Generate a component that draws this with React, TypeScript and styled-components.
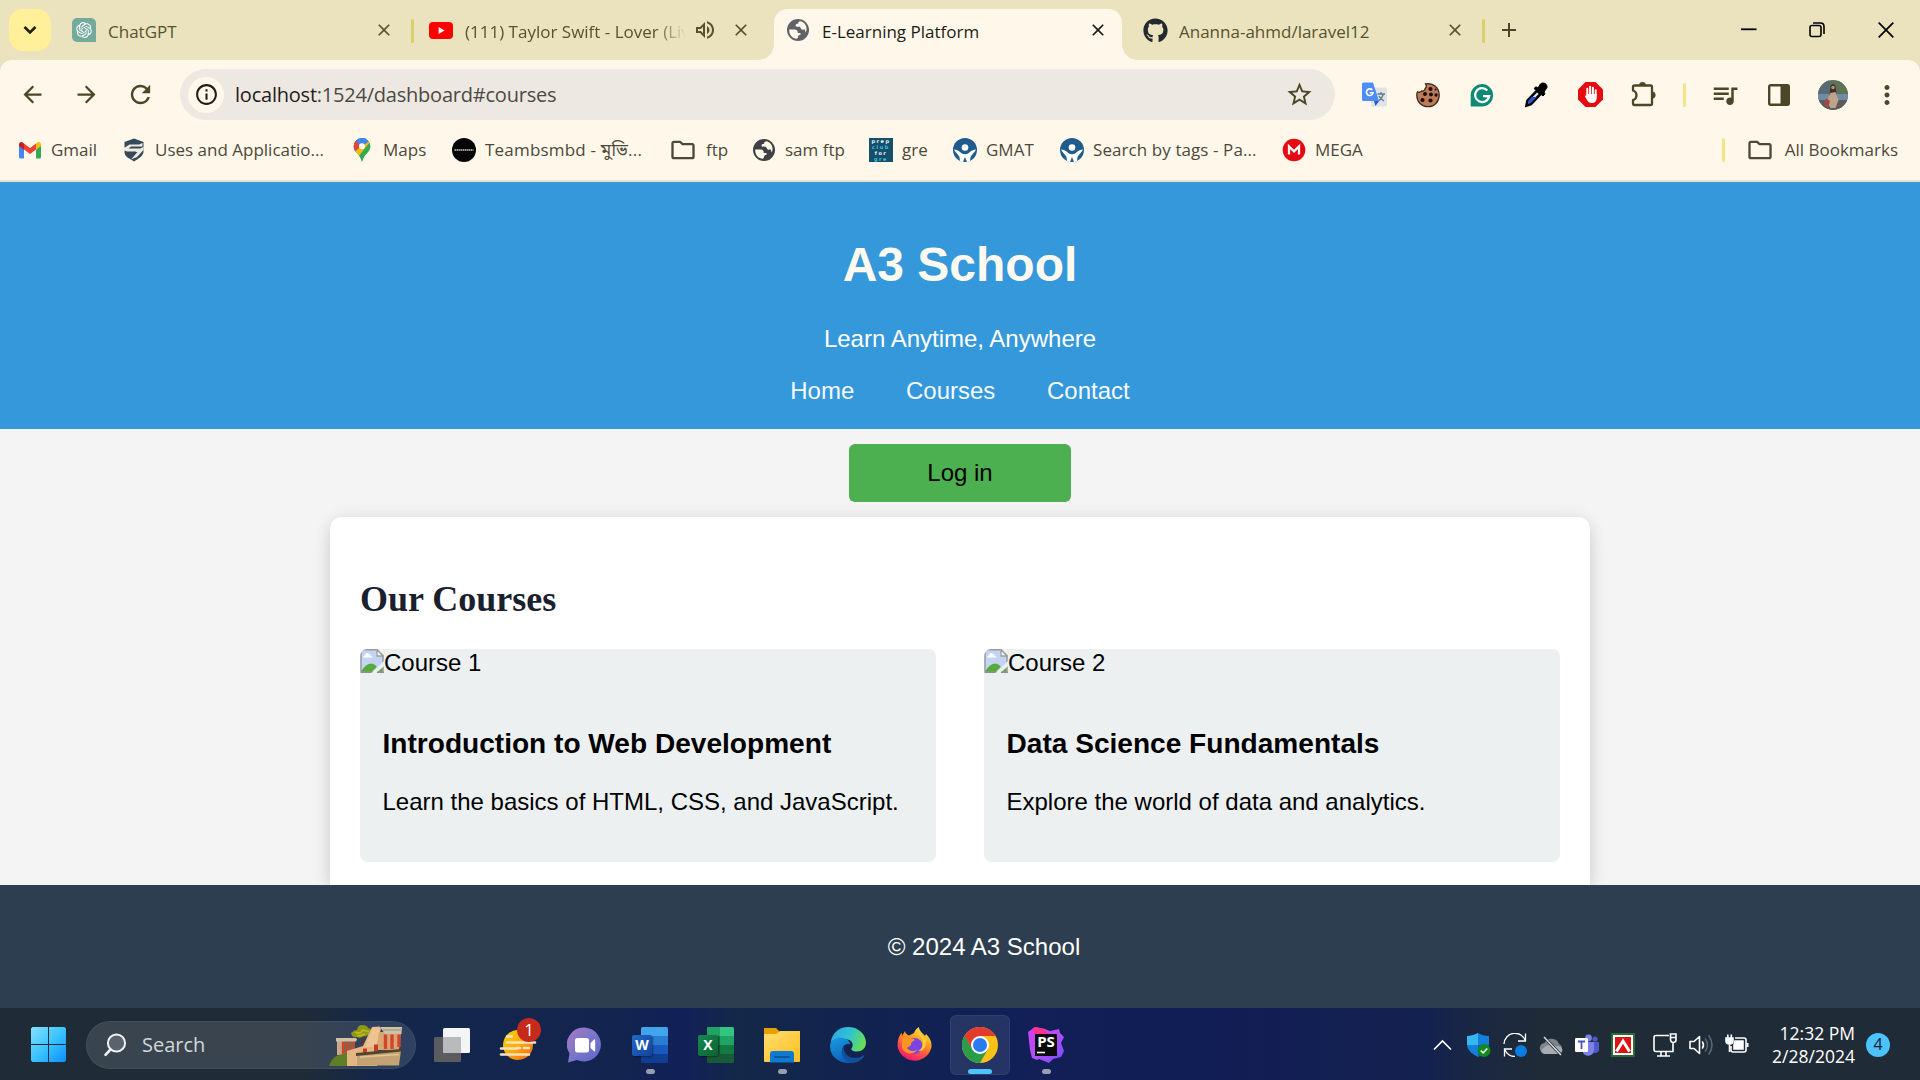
import React from 'react';
import styled, { createGlobalStyle } from 'styled-components';
import {
  MdArrowBack,
  MdArrowForward,
  MdRefresh,
  MdInfoOutline,
  MdStarBorder,
  MdQueueMusic,
  MdOutlineFolder,
  MdMoreVert,
  MdOutlineVolumeUp,
  MdClose,
  MdAdd,
} from 'react-icons/md';
import { FaGithub } from 'react-icons/fa';
import { RiOpenaiFill } from 'react-icons/ri';

const ui = `'Segoe UI', 'Open Sans', 'Noto Sans', 'Noto Sans Bengali', sans-serif`;
const olive = '#4b4628';

const GlobalStyle = createGlobalStyle`
  * { box-sizing: border-box; }
  body { margin: 0; overflow: hidden; background: #f4f4f4; }
  svg { display: block; flex: none; }
`;

const Screen = styled.div`
  width: 1920px;
  height: 1080px;
  overflow: hidden;
  display: flex;
  flex-direction: column;
  font-family: ${ui};
`;

/* ---------- browser chrome ---------- */

const TabStrip = styled.div`
  height: 60px;
  flex: none;
  display: flex;
  background: #ebe3bd;
  padding-left: 9px;
`;

const TabSearch = styled.div`
  width: 42px;
  height: 42px;
  margin: 9px 6px 0 0;
  border-radius: 14px;
  background: #fff099;
  display: flex;
  align-items: center;
  justify-content: center;
`;

const Tab = styled.div<{ $w: number; $active?: boolean; $end?: number }>`
  position: relative;
  width: ${(p) => p.$w}px;
  height: 51px;
  margin-top: 9px;
  padding: 0 ${(p) => 12 + (p.$end ?? 0)}px 9px 15px;
  display: flex;
  align-items: center;
  border-radius: 14px 14px 0 0;
  color: ${(p) => (p.$active ? '#1d1b12' : '#57522f')};
  background: ${(p) => (p.$active ? '#fff8ea' : 'transparent')};
  ${(p) =>
    p.$active &&
    `
    padding-left: 12px;
    &::before, &::after {
      content: '';
      position: absolute;
      bottom: 0;
      width: 15px;
      height: 15px;
    }
    &::before { left: -15px; background: radial-gradient(circle at 0 0, transparent 14.5px, #fff8ea 15px); }
    &::after { right: -15px; background: radial-gradient(circle at 100% 0, transparent 14.5px, #fff8ea 15px); }
  `}
`;

const TabTitle = styled.span<{ $fade?: boolean; $gap?: number }>`
  flex: 1;
  min-width: 0;
  margin-left: ${(p) => p.$gap ?? 12}px;
  overflow: hidden;
  white-space: nowrap;
  font-size: 17px;
  line-height: 24px;
  padding-top: 4px;
  ${(p) => p.$fade && 'mask-image: linear-gradient(90deg, #000 86%, transparent 100%);'}
`;

const TabSound = styled.span`
  margin: 0 14px 0 7px;
`;

const Divider = styled.span<{ $color: string }>`
  width: 3px;
  height: 24px;
  flex: none;
  border-radius: 2px;
  background: ${(p) => p.$color};
`;

const TabDivider = styled(Divider)`
  margin-top: 19px;
`;

const NewTab = styled.span`
  margin: 18px 0 0 12px;
  color: ${olive};
`;

const WindowButtons = styled.div`
  margin-left: auto;
  display: flex;
  align-items: center;
  height: 60px;
`;

const WindowButton = styled.span`
  width: 68.5px;
  display: flex;
  justify-content: center;
`;

const ToolbarBack = styled.div`
  background: #ebe3bd;
  flex: none;
`;

const Toolbar = styled.div`
  height: 69px;
  display: flex;
  align-items: center;
  padding: 0 5px;
  background: #fff8ea;
  border-radius: 12px 12px 0 0;
`;

const ToolButton = styled.span`
  width: 54px;
  flex: none;
  display: flex;
  justify-content: center;
  color: ${olive};
`;

const AddressBar = styled.div`
  width: 1155px;
  height: 51px;
  margin-left: 13px;
  padding: 0 21px 0 8px;
  border-radius: 26px;
  background: #ede8e1;
  display: flex;
  align-items: center;
`;

const SiteInfo = styled.span`
  width: 36px;
  height: 36px;
  border-radius: 50%;
  background: #fff8ea;
  display: flex;
  align-items: center;
  justify-content: center;
  color: #1f1e16;
`;

const Url = styled.span`
  flex: 1;
  margin-left: 11px;
  font-size: 20px;
  letter-spacing: -0.22px;
  color: #4c4a45;
  b {
    font-weight: 400;
    color: #1f1e1a;
  }
`;

const Extensions = styled.div`
  margin-left: 12px;
  display: flex;
  align-items: center;
`;

const DividerSlot = styled.span`
  width: 27px;
  display: flex;
  justify-content: center;
`;

const Bookmarks = styled.div`
  height: 53px;
  padding: 0 0 10px 18px;
  display: flex;
  align-items: center;
  background: #fff8ea;
  border-bottom: 2px solid #e9e2cf;
  color: #4c483a;
  font-size: 17px;
`;

const Bookmark = styled.div<{ $w: number; $track?: number }>`
  width: ${(p) => p.$w}px;
  height: 26px;
  flex: none;
  display: flex;
  align-items: center;
  gap: 9px;
  line-height: 26px;
  white-space: nowrap;
  letter-spacing: ${(p) => p.$track ?? 0}px;
`;

const AllBookmarks = styled.div`
  margin-left: auto;
  padding-right: 22px;
  display: flex;
  align-items: center;
  gap: 11px;
  ${Divider} {
    margin-right: 10px;
  }
`;

/* ---------- page ---------- */

const Page = styled.main`
  height: 826px;
  flex: none;
  overflow: hidden;
  display: flex;
  flex-direction: column;
  align-items: center;
  background: #f4f4f4;
  font-family: 'Liberation Sans', Arial, sans-serif;
  font-size: 24px;
  line-height: 27px;
  color: #000;
`;

const Hero = styled.header`
  width: 100%;
  height: 247px;
  flex: none;
  padding-top: 55px;
  background: #3498db;
  color: #fff;
  text-align: center;
`;

const HeroTitle = styled.h1`
  margin: 0 0 33px;
  font-size: 48px;
  line-height: 55px;
  color: #fffaf0;
`;

const HeroText = styled.p`
  margin: 0 0 25px;
`;

const Nav = styled.nav`
  display: flex;
  justify-content: center;
  gap: 51.7px;
  color: #f6faff;
`;

const Login = styled.button`
  width: 222px;
  height: 58px;
  flex: none;
  margin: 15px 0;
  padding: 0 0 2px;
  border: 0;
  border-radius: 6px;
  background: #4caf50;
  font: inherit;
  color: #000;
`;

const Panel = styled.section`
  width: 1260px;
  flex: none;
  height: 368px;
  padding: 30px;
  border-radius: 12px 12px 0 0;
  background: #fff;
  box-shadow: 0 10px 18px rgba(0, 0, 0, 0.1), 0 0 18px rgba(0, 0, 0, 0.08);
`;

const PanelTitle = styled.h2`
  margin: 31px 0 29px;
  font: 700 36px/42px 'Liberation Serif', 'Times New Roman', serif;
  color: #1a202e;
`;

const Courses = styled.div`
  display: grid;
  grid-template-columns: 1fr 1fr;
  gap: 48px;
`;

const Course = styled.article`
  height: 213px;
  border-radius: 7.5px;
  overflow: hidden;
  background: #ecf0f1;
`;

const CourseImage = styled.div`
  height: 27px;
  display: flex;
`;

const CourseTitle = styled.h3`
  margin: 52px 22.5px 28px;
  font-size: 28.08px;
  line-height: 32px;
`;

const CourseText = styled.p`
  margin: 0 22.5px;
`;

const Footer = styled.footer`
  width: 100%;
  height: 123px;
  flex: none;
  position: relative;
  padding: 48px 0 0 48px;
  background: #2c3e50;
  color: #fff;
  text-align: center;
`;

/* ---------- taskbar ---------- */

const Taskbar = styled.div`
  height: 72px;
  flex: none;
  display: flex;
  align-items: center;
  padding: 1px 0 0 31px;
  color: #fff;
  background: linear-gradient(
    90deg,
    #1f2b36 0,
    #1f2b36 300px,
    #14274a 380px,
    #13244f 620px,
    #112058 680px,
    #142848 740px,
    #12234f 850px,
    #112056 1000px,
    #111d55 1200px,
    #13214f 1430px,
    #1a2742 1475px,
    #1f2b37 1540px,
    #1f2b36 100%
  );
`;

const SearchBox = styled.div`
  width: 330px;
  height: 48px;
  margin: 0 3px 0 20px;
  padding: 0 12px 0 17px;
  border-radius: 24px;
  border: 1px solid rgba(255, 255, 255, 0.05);
  background: rgba(255, 255, 255, 0.12);
  display: flex;
  align-items: center;
  font-size: 20px;
  color: #d3d7da;
  overflow: hidden;
`;

const SearchLabel = styled.span`
  flex: 1;
  margin-left: 15px;
`;

const TaskApp = styled.div<{ $state?: 'open' | 'active' }>`
  position: relative;
  width: 60px;
  height: 60px;
  margin: 0 3px;
  flex: none;
  display: flex;
  align-items: center;
  justify-content: center;
  border-radius: 6px;
  ${(p) =>
    p.$state === 'active' &&
    'background: rgba(255,255,255,0.09); box-shadow: inset 0 0 0 1px rgba(255,255,255,0.06);'}
  &::after {
    content: '';
    display: ${(p) => (p.$state ? 'block' : 'none')};
    position: absolute;
    bottom: 1px;
    width: ${(p) => (p.$state === 'active' ? 24 : 9)}px;
    height: 5px;
    border-radius: 3px;
    background: ${(p) => (p.$state === 'active' ? '#4cc2ff' : '#989eb2')};
  }
`;

const CountBadge = styled.span`
  position: absolute;
  left: 29px;
  top: 3px;
  width: 24px;
  height: 24px;
  border-radius: 50%;
  background: #c42b1c;
  font-size: 17px;
  line-height: 23px;
  text-align: center;
`;

const Tray = styled.div`
  margin-left: auto;
  display: flex;
  align-items: center;
  padding-right: 30px;
`;

const TrayIcon = styled.span<{ $gap?: number }>`
  margin-right: ${(p) => p.$gap ?? 12}px;
  display: flex;
`;

const Clock = styled.div`
  width: 94px;
  margin: 0 11px 0 12px;
  text-align: right;
  font-size: 17.5px;
  line-height: 23px;
  white-space: nowrap;
`;

const Notifications = styled.span`
  width: 24px;
  height: 24px;
  border-radius: 50%;
  background: #4cc2ff;
  color: #10202c;
  font-size: 16px;
  line-height: 23px;
  text-align: center;
`;

/* ---------- drawings ---------- */

const GptIcon = () => (
  <svg width="24" height="24" viewBox="0 0 24 24">
    <path d="M5 0h14a5 5 0 0 1 5 5v19H5a5 5 0 0 1-5-5V5a5 5 0 0 1 5-5z" fill="#74aa9c" />
    <g transform="translate(2.5 2.5)" color="#fff">
      <RiOpenaiFill size={19} />
    </g>
  </svg>
);

const YoutubeIcon = () => (
  <svg width="24" height="24" viewBox="0 0 24 24">
    <rect y="4" width="24" height="17" rx="4" fill="#f00" />
    <path d="M9.6 9v7l6-3.5z" fill="#fff" />
  </svg>
);

const GlobeIcon = ({ color }: { color: string }) => (
  <svg width="24" height="24" viewBox="0 0 24 24">
    <circle cx="12" cy="12" r="11" fill={color} />
    <path
      d="M3.200 11.500h5.300c2.600 0 3.300 1.300 3.300 3.500h2.700v1.700c-1.800.2-2.400.8-2.500 2.500-.2.900-.8 1.500-2 1.500C6 20 3 16.500 3.200 11.500z"
      fill="#fff8ea"
    />
    <path
      d="M14.700 3.300c-2 .2-2.700 1-2.500 2.500-2 0-2.700.6-2.700 2.400 1.500.5 2.500.8 4.500.6l1.200 2.200c.8 1.200 2.300.8 3.300.3l1.300 3.200c2-4.500 0-9.500-5.100-11.200z"
      fill="#fff8ea"
    />
  </svg>
);

const PuzzleIcon = () => (
  <svg width="26" height="28" viewBox="0 0 26 28">
    <path
      d="M3.500 4.500h16q1.500 0 1.500 1.500v16.500q0 1.500-1.500 1.500h-16Q2 24 2 22.500V19.200q3.500-1.200 3.500-4.900T2 9.500V6q0-1.500 1.500-1.500z"
      fill="none"
      stroke={olive}
      strokeWidth="2.300"
      strokeLinejoin="round"
    />
    <path d="M8.300 4.500a3.200 3.200 0 0 1 6.400 0zM21 10.800a3.300 3.300 0 0 1 0 6.600z" fill={olive} stroke={olive} strokeWidth=".6" />
  </svg>
);

const GmailIcon = () => (
  <svg width="24" height="24" viewBox="0 0 24 24">
    <path d="M1 20.5V6l5 3.8v10.7H2.5A1.5 1.5 0 0 1 1 19z" fill="#4285f4" />
    <path d="M23 20.5V6l-5 3.8v10.7h3.500A1.500 1.500 0 0 0 23 19z" fill="#34a853" />
    <path d="M6 5.500l6 4.500 6-4.500v6l-6 4.500-6-4.500z" fill="#ea4335" />
    <path d="M18 5.500l1.400-1C21 3.300 23 4.500 23 6.500V8l-5 3.700z" fill="#fbbc04" />
    <path d="M6 5.500l-1.400-1C3 3.300 1 4.500 1 6.500V8l5 3.700z" fill="#c5221f" />
  </svg>
);

const ShieldS = () => (
  <svg width="24" height="24" viewBox="0 0 24 24">
    <path d="M12 .5l9.500 3.500v9.500c0 4-4.500 7-9.500 10-5-3-9.500-6-9.500-10V4z" fill="#35495a" />
    <path d="M2 10L7.500 6.500H17L20.500 5v3.500H9L6.500 10.500H18l3.500-1.500v3L15 19l-6 2.500 6.500-7.500H5L2 15z" fill="#fff8ea" opacity=".92" />
    <path d="M2.500 12.500L5 13.500h9L7 20.500c-3-2-4.500-4-4.500-7z" fill="#35495a" />
  </svg>
);

const MapsIcon = () => (
  <svg width="24" height="24" viewBox="0 0 24 24">
    <clipPath id="pin">
      <path d="M12 0a8.300 8.300 0 0 0-8.300 8.300C3.700 14.500 10.500 16 12 24c1.500-8 8.300-9.500 8.300-15.700A8.300 8.300 0 0 0 12 0z" />
    </clipPath>
    <g clipPath="url(#pin)">
      <rect width="24" height="24" fill="#34a853" />
      <path d="M0 0h24L14 8 4 17z" fill="#4285f4" />
      <path d="M0 2h6l6 6-9 7z" fill="#ea4335" />
      <path d="M3 15.500L18 2l3 4-13 13z" fill="#fbbc04" />
      <path d="M6 2.500L12 0h6l1 3-7 6z" fill="#4285f4" />
      <path d="M20 4l2 9-10 13-4-7z" fill="#34a853" />
    </g>
    <circle cx="12" cy="8.300" r="3" fill="#fff" />
  </svg>
);

const TeamDot = () => (
  <svg width="24" height="24" viewBox="0 0 24 24">
    <circle cx="12" cy="12" r="12" fill="#050505" />
    <path d="M2.500 12h19" stroke="#999" strokeWidth="2" strokeDasharray="1.500 .5" />
  </svg>
);

const Tiny = styled.span`
  width: 24px;
  height: 24px;
  flex: none;
  display: grid;
  grid-template-rows: repeat(4, 6px);
  background: #14506c;
  color: #e8f4f4;
  font-family: 'DejaVu Sans', sans-serif;
  font-size: 5px;
  font-weight: 700;
  line-height: 6px;
  letter-spacing: 1.500px;
  text-align: center;
  i {
    font-style: normal;
  }
  i:nth-child(even) {
    color: #3fc4dc;
  }
`;

const PersonIcon = () => (
  <svg width="24" height="24" viewBox="0 0 24 24">
    <circle cx="12" cy="12" r="12" fill="#1f5c8d" />
    <circle cx="12" cy="9.500" r="3.300" fill="#fff" />
    <path
      d="M1 11.500c2.500 0 5.500 1.500 7.500 3.800q3.500 1.700 7 0c2-2.300 5-3.800 7.500-3.800-.8 2.500-4 4.500-5.500 7.500l-.5 4.200-3 .8-2-5-2 5-3-.8-.5-4.200C5 16 1.800 14 1 11.500z"
      fill="#fff"
    />
  </svg>
);

const MegaIcon = () => (
  <svg width="24" height="24" viewBox="0 0 24 24">
    <circle cx="12" cy="12" r="11.300" fill="#e50914" />
    <path d="M7 16.500v-8l5 4.800 5-4.800v8" fill="none" stroke="#fff" strokeWidth="2.300" />
  </svg>
);

const TranslateIcon = () => (
  <svg width="25" height="25" viewBox="0 0 25 25">
    <rect x="9" y="5.500" width="16" height="19" rx="1.500" fill="#dfe2e6" />
    <path
      d="M15.500 12h7.500M19 10v2M21.500 12c-1 3.500-3 5.500-5 7M17 14c1 2.200 2.500 3.800 5 5"
      stroke="#5f7d8c"
      strokeWidth="1.300"
      fill="none"
    />
    <path d="M1.500.5H11L17 19H1.500A1.500 1.500 0 0 1 0 17.500V2A1.500 1.500 0 0 1 1.500.5z" fill="#4e8df5" />
    <path d="M12 19h5l-3.500 5z" fill="#2856c4" />
    <path d="M10.300 8.100A3.300 3.300 0 1 0 11 10.800H7.700" stroke="#fff" strokeWidth="1.600" fill="none" />
  </svg>
);

const CookieIcon = () => (
  <svg width="24" height="26" viewBox="0 0 24 26">
    <path
      d="M9.500 1.800C17.500.3 23.200 6 23.200 13c0 6.500-4.500 11.700-11 11.700C5.500 24.700 1 20 .8 13.500c-.1-2 .2-2.700.7-3.700 1.500.8 3.300.6 4-.8 2 .3 3.700-.7 3.700-2.700 1-.5 1.300-2.500.3-4.500z"
      fill="#c07a56"
      stroke="#3a2a22"
      strokeWidth="1.300"
    />
    <g fill="#17110e">
      <circle cx="14.500" cy="7" r="2.100" />
      <circle cx="9" cy="12" r="2" />
      <circle cx="15" cy="12.500" r="2" />
      <circle cx="20" cy="13" r="1.700" />
      <circle cx="6.500" cy="18" r="2.100" />
      <circle cx="14.500" cy="18.500" r="2.100" />
      <circle cx="19.500" cy="7.500" r="1" />
    </g>
  </svg>
);

const GrammarlyIcon = () => (
  <svg width="24" height="24" viewBox="0 0 24 24">
    <path d="M.7 12A11.200 11.200 0 1 1 12 23.500H.7z" fill="#0e8a74" />
    <path d="M17.300 7.400A7 7 0 1 0 19 13.200H13" stroke="#fff" strokeWidth="2.200" fill="none" />
    <path d="M15.500 12.200h5l-1.500 4z" fill="#fff" />
  </svg>
);

const DropperIcon = () => (
  <svg width="24" height="26" viewBox="0 0 24 26">
    <path d="M2.500 23.500l1-5L13 8.500l3.500 3.500-9.500 10z" fill="#d7e2fb" stroke="#000" strokeWidth="2.600" />
    <path d="M4 22l.8-3.800L7.500 15h5.300L7 21z" fill="#2b52d6" />
    <path d="M10 6.500l2-1.700 2 1.200 2-3.500c1.500-2.500 7.500-2 7 3L20 10l1 2-2 2z" fill="#000" stroke="#000" />
  </svg>
);

const BlockHand = () => (
  <svg width="25" height="25" viewBox="0 0 25 25">
    <path d="M7.500 0h10L25 7.500v10L17.500 25h-10L0 17.500v-10z" fill="#e60b10" />
    <path d="M9.300 14V6.800M12.100 13V4.800M14.900 13V5.800M17.700 14V8.300" stroke="#fff" strokeWidth="2" strokeLinecap="round" />
    <path d="M8.300 12h10.400v3.500c0 3.800-2 5.500-5 5.500-3 0-4.700-2.500-6.900-7q1-1 2 .3z" fill="#fff" />
  </svg>
);

const SidePanelIcon = () => (
  <svg width="24" height="26" viewBox="0 0 24 26">
    <rect x="2.200" y="3.200" width="19.600" height="19.600" rx="1.500" fill="none" stroke={olive} strokeWidth="2.400" />
    <path d="M13.500 3H22v20h-8.500z" fill={olive} />
  </svg>
);

const Avatar = () => (
  <svg width="30" height="30" viewBox="0 0 30 30">
    <clipPath id="face">
      <circle cx="15" cy="15" r="15" />
    </clipPath>
    <g clipPath="url(#face)">
      <rect width="30" height="30" fill="#5f6f5e" />
      <path d="M0 0h11v12L4 16H0z" fill="#566b75" />
      <path d="M20 0h10v14h-8z" fill="#5d7850" />
      <rect y="14" width="30" height="7" fill="#6f8ba6" />
      <path d="M0 20h30v10H0z" fill="#5f5c58" />
      <path d="M12.500 6q2.500-4 5 0l1 9-7 1z" fill="#3d322e" />
      <path d="M12.500 13l5-1 3 8-3 8h-5l-4-7z" fill="#bda387" />
      <circle cx="15" cy="7.500" r="1.700" fill="#b98d75" />
      <path d="M8 18l4 3-2 7-4-4z" fill="#9a4a44" />
    </g>
  </svg>
);

const BrokenImage = () => (
  <svg width="24" height="24" viewBox="0 0 24 24">
    <path d="M1 .8h16l6 6V23H1z" fill="#c3d5f5" stroke="#9c9c9c" strokeWidth="1.500" />
    <path d="M17 1v6h6z" fill="#fff" stroke="#9c9c9c" strokeWidth="1.300" />
    <path d="M3 8.500q0-2 2-2Q5.500 3.500 8 4.200t2.300 2.300q2 0 2 2z" fill="#fff" />
    <path d="M1.800 21.500q4-6.500 9-7 4 0 6 3.500l-5 4.700H1.800z" fill="#57ab38" />
    <path d="M19 19.500l3.300-1v4h-5z" fill="#57ab38" />
    <path d="M24.500 11.500L11.500 24h5l8-7.500z" fill="#ecf0f1" />
    <path d="M1 23.200h10.500M17 23.200h7" stroke="#8e8e8e" strokeWidth="1.500" />
  </svg>
);

const WindowsLogo = () => (
  <svg width="35" height="35" viewBox="0 0 35 35">
    <defs>
      <linearGradient id="win" x1="0" y1="0" x2="1" y2="1">
        <stop offset="0" stopColor="#86dfff" />
        <stop offset=".5" stopColor="#3cc4fd" />
        <stop offset="1" stopColor="#0a8fff" />
      </linearGradient>
    </defs>
    <path d="M1.500 0H17v17H0V1.500zM18 0h15.500L35 1.500V17H18zM0 18h17v17H1.500L0 33.500zM18 18h17v15.500L33.500 35H18z" fill="url(#win)" />
  </svg>
);

const SearchGlass = () => (
  <svg width="23" height="24" viewBox="0 0 23 24">
    <circle cx="12.500" cy="10" r="8.600" fill="#5a636c" stroke="#eef0f1" strokeWidth="2" />
    <path d="M6.500 16.500L1.500 21.800" stroke="#eef0f1" strokeWidth="2.600" strokeLinecap="round" />
  </svg>
);

const Palace = () => (
  <svg width="74" height="42" viewBox="0 0 74 42">
    <path d="M8 17h18v14H8z" fill="#7f6653" />
    <path d="M8 17h5v14H8z" fill="#c9a987" />
    <path d="M7 14h20l1 1.500-1 2H7z" fill="#cfc2a4" />
    <path d="M14 18v12M18.500 18v12M23.500 18v12" stroke="#d2452c" strokeWidth="2.400" />
    <path d="M33 12l1.500 12" stroke="#5a3b1a" strokeWidth="1.800" />
    <path d="M22 9q3-3 6-3 1-5 5-5 5 0 6 3 5 1 3 5-3 4-7 3-4 3-7 1-5 1-6-4z" fill="#8f9a14" />
    <path d="M26 8q5 3 8-2 4 1 6 2M28 12q4 0 8-2" stroke="#c3b91c" strokeWidth="1.500" fill="none" />
    <path d="M18 42V27l16-5 9-19 8-.5L48 24v18z" fill="#e3b684" />
    <path d="M44 3l-8 20h12l4-19z" fill="#ecc391" />
    <path d="M50 8h22l-2 18H47z" fill="#d9a573" />
    <path d="M51 3h22l-.5 7H56z" fill="#cdc1a6" />
    <path d="M54 6h18" stroke="#9a8f79" strokeWidth="1" />
    <path d="M56.500 10.500V25M63 10.500V25M70 10.500V23" stroke="#d2452c" strokeWidth="3.400" />
    <path d="M34 24.500h4V29h-4zM45 20.500h4V28h-4z" fill="#c23c28" />
    <path d="M28 30l44-4-2 15.500H28z" fill="#c3a274" />
    <path d="M27 29l45-4v2.500L27 32z" fill="#54432f" />
    <path d="M31 33l39-2.500" stroke="#e2c491" strokeWidth="1.500" />
    <path d="M0 42q4-13 18-12v12z" fill="#5e7f27" />
  </svg>
);

const TaskView = () => (
  <svg width="36" height="36" viewBox="0 0 36 36">
    <rect x="9" y="1" width="27" height="25" rx="1.500" fill="#f4f5f6" />
    <rect x="0" y="10" width="27" height="25" rx="1.500" fill="#5b5c5f" />
    <path d="M9 10h18v16H9z" fill="#b9babb" />
  </svg>
);

const WeatherIcon = () => (
  <svg width="40" height="38" viewBox="0 0 40 38">
    <defs>
      <linearGradient id="sun" x1="0" y1="0" x2="1" y2="1">
        <stop offset="0" stopColor="#ffd000" />
        <stop offset=".5" stopColor="#ffab0a" />
        <stop offset="1" stopColor="#ea6212" />
      </linearGradient>
    </defs>
    <circle cx="20" cy="19" r="15" fill="url(#sun)" />
    <path d="M9 10.500h5M9 16.500h28M19 22h3M26 22h5M3 22.500h16M3 28.500h28" stroke="#f6e4c0" strokeWidth="2.600" strokeLinecap="round" />
  </svg>
);

const ChatIcon = () => (
  <svg width="35" height="36" viewBox="0 0 35 36">
    <defs>
      <linearGradient id="chat" x1="0" y1="0" x2="1" y2="1">
        <stop offset="0" stopColor="#a779c4" />
        <stop offset=".5" stopColor="#7b76c9" />
        <stop offset="1" stopColor="#5c63cf" />
      </linearGradient>
    </defs>
    <path d="M18 .5a17 17 0 1 1-8 32.500L1 35.500l1.500-9A17 17 0 0 1 18 .5z" fill="url(#chat)" />
    <rect x="8" y="11" width="14" height="14.500" rx="2.500" fill="#fff" />
    <path d="M23.500 16l3.500-3.500q1.200-.6 1.200 1v10q0 1.500-1.200.8L23.500 21z" fill="#fff" />
  </svg>
);

const OfficeGlyph = styled.span<{ $from: string; $to: string }>`
  position: absolute;
  left: 12px;
  top: 20px;
  width: 20px;
  height: 21px;
  border-radius: 2px;
  background: linear-gradient(135deg, ${(p) => p.$from}, ${(p) => p.$to});
  box-shadow: 1px 1px 2px rgba(0, 0, 0, 0.4);
  font-size: 14px;
  font-weight: 700;
  line-height: 20px;
  text-align: center;
`;

const WordSheet = () => (
  <svg width="36" height="36" viewBox="0 0 36 36">
    <path d="M9 1.500Q9 0 10.500 0h24Q36 0 36 1.500V9H9z" fill="#41a5ee" />
    <path d="M9 9h27v9H9z" fill="#2b7cd3" />
    <path d="M9 18h27v9H9z" fill="#185abd" />
    <path d="M9 27h27v7.500q0 1.500-1.500 1.500h-24Q9 36 9 34.500z" fill="#103f91" />
  </svg>
);

const ExcelSheet = () => (
  <svg width="36" height="36" viewBox="0 0 36 36">
    <path d="M9 0h14v9H9z" fill="#21a366" />
    <path d="M22 0h12.500Q36 0 36 1.500V9H22z" fill="#33c481" />
    <path d="M9 9h14v9H9z" fill="#107c41" />
    <path d="M22 9h14v9H22z" fill="#21a366" />
    <path d="M9 18h27v9H9z" fill="#185c37" />
    <path d="M22 18h14v9H22z" fill="#107c41" />
    <path d="M9 27h27v7.500q0 1.500-1.500 1.500h-24Q9 36 9 34.500z" fill="#185c37" />
  </svg>
);

const FolderIcon = () => (
  <svg width="36" height="36" viewBox="0 0 36 36">
    <defs>
      <linearGradient id="fold" x1="0" y1="0" x2="1" y2="1">
        <stop offset="0" stopColor="#ffdd70" />
        <stop offset="1" stopColor="#ffc01e" />
      </linearGradient>
    </defs>
    <path d="M0 1h12l4 4-3 4H0z" fill="#e4a006" />
    <path d="M0 7h12l4-3h20v30q0 1-1 1H1q-1 0-1-1z" fill="url(#fold)" />
    <path d="M6 35.500V27q0-3 3-3h18q3 0 3 3v8.500z" fill="#0f7ad0" />
    <path d="M11 30h14" stroke="#0b559d" strokeWidth="2" strokeLinecap="round" />
  </svg>
);

const EdgeIcon = () => (
  <svg width="36" height="36" viewBox="0 0 36 36">
    <defs>
      <linearGradient id="edgeTop" x1="0" y1=".3" x2="1" y2=".6">
        <stop offset="0" stopColor="#2fa9e6" />
        <stop offset=".5" stopColor="#2fc3d0" />
        <stop offset="1" stopColor="#6be04c" />
      </linearGradient>
      <linearGradient id="edgeLeft" x1="0" y1="0" x2=".4" y2="1">
        <stop offset="0" stopColor="#1b9de2" />
        <stop offset="1" stopColor="#0b62bd" />
      </linearGradient>
    </defs>
    <path d="M.5 16C2 6 9 0 18 0c11 0 18 8 18 15.500 0 6-4.500 9-9 9-4 0-6.500-1.500-5.500-3 2.500-3.500 1-8-4-9C10 11 2.500 12 .5 16z" fill="url(#edgeTop)" />
    <path d="M.2 17.500C2 12 8 9.500 13.500 11c4 1 6.500 3.500 6.500 6.500-5-2-9 3-7.500 9 1.300 5 5.500 8.500 9.500 9C9 38-1 29 .2 17.500z" fill="url(#edgeLeft)" />
    <path d="M14 18.500c-1.500 8 5 12.500 11 12.500 4 0 6.500-1.500 8-2.500 1-.5 1.500.3 1 1C31 34 26 36 21.500 36 13 35 9 24 14 18.500z" fill="#124f9c" />
  </svg>
);

const FirefoxIcon = () => (
  <svg width="35" height="36" viewBox="0 0 35 36">
    <defs>
      <linearGradient id="fox" x1=".8" y1="0" x2=".3" y2="1">
        <stop offset="0" stopColor="#fff04a" />
        <stop offset=".4" stopColor="#ff9a1f" />
        <stop offset=".75" stopColor="#ff4150" />
        <stop offset="1" stopColor="#e8157c" />
      </linearGradient>
    </defs>
    <path d="M17 6c1-3 3-5 5-6 0 4 4 6 6 9l1-2c4 4 6 8 5.500 13A17.300 17.300 0 0 1 .5 19C.5 13 2 9 4.500 5.500L5 9l3-5c0 2 2 4 4 4.500z" fill="url(#fox)" />
    <circle cx="17.500" cy="19" r="8" fill="#7a45e0" />
    <path d="M5 11c3-2 6-1 8 1 2-.5 4 0 5 1-2 1-4 2-4 4 0 3-3 2-4 4 2 3 6 4 10 2-3 5-12 5-15-2z" fill="#ff9422" />
    <path d="M17 8c3-1 7 1 8 4 2 6 0 10-4 12 6 1 9-6 8-11-2-4-8-9-12-5z" fill="#ffcf36" />
  </svg>
);

const ChromeIcon = () => (
  <svg width="36" height="36" viewBox="0 0 36 36">
    <circle cx="18" cy="18" r="18" fill="#fbc116" />
    <path d="M2.400 9A18 18 0 0 0 18 36l7.800-13.500H10.200z" fill="#2a9d48" />
    <path d="M2.400 9A18 18 0 0 1 33.600 9H18l-7.800 13.500z" fill="#e33b2e" />
    <path d="M2.400 9l7.800 13.500L12 24l-6 1z" fill="#2a9d48" />
    <circle cx="18" cy="18" r="9" fill="#fff" />
    <circle cx="18" cy="18" r="7" fill="#2a7bf0" />
  </svg>
);

const StormShape = () => (
  <svg width="36" height="36" viewBox="0 0 36 36">
    <defs>
      <linearGradient id="storm" x1="0" y1="0" x2="1" y2="1">
        <stop offset="0" stopColor="#d23cf0" />
        <stop offset=".5" stopColor="#b350f5" />
        <stop offset="1" stopColor="#6f4bff" />
      </linearGradient>
    </defs>
    <path d="M0 5l7-5 10 2 5 2 9-2 1 4 4 4-3 6 3 8-3 6-8 2-4 4-10-4-2 1-5-2-2-8z" fill="url(#storm)" />
    <path d="M7 0l10 2 3 6H8L4 2z" fill="#ff3190" />
    <path d="M7 7h22v22H7z" fill="#0b0b0d" />
    <path d="M9 25.500h8" stroke="#fff" strokeWidth="1.600" />
  </svg>
);

const StormText = styled.span`
  position: absolute;
  left: 19px;
  top: 19px;
  width: 22px;
  font-size: 15px;
  font-weight: 700;
  line-height: 15px;
  text-align: center;
`;

const IconSync = () => (
  <svg width="24" height="24" viewBox="0 0 24 24" fill="none" stroke="#fff" strokeWidth="1.300">
    <path d="M1 11A11 11 0 0 1 22.500 8M22.500.5V8H15M1.500 23.500V16H9M2 17a11 11 0 0 0 10 6.500" />
    <circle cx="18" cy="18" r="6" fill="#0a7de0" stroke="none" />
  </svg>
);

const IconShield = () => (
  <svg width="24" height="24" viewBox="0 0 24 24">
    <path d="M11 0c3 2 7 3 11 3v8c0 6-5 10-11 13C5 21 0 17 0 11V3c4 0 8-1 11-3z" fill="#1380dc" />
    <path d="M11 0v12H0V3c4 0 8-1 11-3z" fill="#37b7f2" />
    <path d="M11 12h11c-.5 6-5 9-11 12z" fill="#0b5cae" />
    <circle cx="17" cy="17.500" r="6.500" fill="#0f8a1c" />
    <path d="M13.800 17.600l2.300 2.300 4.200-4.300" stroke="#fff" strokeWidth="1.500" fill="none" />
  </svg>
);

const IconCloud = () => (
  <svg width="24" height="24" viewBox="0 0 24 24">
    <path d="M6 20a5 5 0 0 1-.5-10A8 8 0 0 1 20 11a4.700 4.700 0 0 1-1 9z" fill="#7d848b" />
    <path d="M2 18q6-9 14-5 7 0 7.500 4-.5 4-5 4H6q-3 0-4-3z" fill="#a7acb1" />
    <path d="M5 4l17 18" stroke="#1f2b36" strokeWidth="3" />
    <path d="M5 4l17 18" stroke="#d9dcde" strokeWidth="1.500" />
  </svg>
);

const TeamsIcon = () => (
  <svg width="24" height="24" viewBox="0 0 24 24">
    <circle cx="13.500" cy="5" r="3.400" fill="#7b83eb" />
    <circle cx="20" cy="6" r="2.600" fill="#5059c9" />
    <path d="M14 9h10v7q0 4-4 4h-6z" fill="#5059c9" />
    <path d="M8 9h11v8a6 6 0 0 1-11 3z" fill="#7b83eb" />
    <rect y="5" width="13" height="14" rx="1.200" fill="#fff" />
    <path d="M3 8.500h7M6.500 8.500V16" stroke="#4b53bc" strokeWidth="1.800" />
  </svg>
);

const RedArrow = () => (
  <svg width="24" height="24" viewBox="0 0 24 24">
    <rect width="24" height="24" fill="#2a6a3a" />
    <rect x="2" y="2" width="20" height="20" fill="#fff" />
    <rect x="4" y="4" width="16" height="16" fill="#da1414" />
    <path d="M5.500 18.500L12 8l6.500 10.500" stroke="#fff" strokeWidth="3" fill="none" />
    <path d="M9 19l3-3.500 3 3.500z" fill="#da1414" />
  </svg>
);

const NetIcon = () => (
  <svg width="24" height="24" viewBox="0 0 24 24" fill="none" stroke="#fff" strokeWidth="1.600">
    <path d="M16 2.500H3q-2 0-2 2v12q0 2 2 2h17V10M4 23h13M8 18.500V23M13 18.500V23M17.500 1h5.500v5.500q0 3-2.700 3t-2.800-3zM17.500 4.500H23" />
  </svg>
);

const SoundIcon = () => (
  <svg width="24" height="24" viewBox="0 0 24 24" fill="none" strokeWidth="1.600" strokeLinecap="round">
    <path d="M1 8.500h4L10.500 3.500v17L5 15.500H1z" stroke="#fff" strokeLinejoin="round" />
    <path d="M13.500 9q2 3 0 6" stroke="#fff" />
    <path d="M16.500 6q4 6 0 12M20 3q6 9 0 18" stroke="#5d666f" />
  </svg>
);

const BatteryIcon = () => (
  <svg width="24" height="24" viewBox="0 0 24 24" fill="none" stroke="#fff" strokeWidth="1.600">
    <path d="M10 5h9q2 0 2 2v10q0 2-2 2H8q-2 0-2-2v-4" />
    <path d="M10 8h8v8H9v-4z" fill="#fff" />
    <path d="M22.500 10v4" strokeWidth="2" />
    <path d="M1 5h7v3q0 3-3.500 3T1 8zM4.500 11v8" fill="#fff" />
    <path d="M2.800 1.500V5M6.300 1.500V5" />
  </svg>
);

/* ---------- data ---------- */

const bookmarks: { label: string; icon: React.ReactNode; w: number; track?: number }[] = [
  { label: 'Gmail', icon: <GmailIcon />, w: 104 },
  { label: 'Uses and Applicatio...', icon: <ShieldS />, w: 228 },
  { label: 'Maps', icon: <MapsIcon />, w: 102 },
  { label: 'Teambsmbd - মুভি...', icon: <TeamDot />, w: 217, track: 0.2 },
  { label: 'ftp', icon: <MdOutlineFolder size={28} />, w: 83 },
  { label: 'sam ftp', icon: <GlobeIcon color="#3f4145" />, w: 117 },
  {
    label: 'gre',
    icon: (
      <Tiny>
        <i>prep</i>
        <i>club</i>
        <i>for</i>
        <i>gre</i>
      </Tiny>
    ),
    w: 84,
  },
  { label: 'GMAT', icon: <PersonIcon />, w: 107 },
  { label: 'Search by tags - Pa...', icon: <PersonIcon />, w: 222, track: 0.08 },
  { label: 'MEGA', icon: <MegaIcon />, w: 100 },
];

const courses = [
  { alt: 'Course 1', title: 'Introduction to Web Development', text: 'Learn the basics of HTML, CSS, and JavaScript.' },
  { alt: 'Course 2', title: 'Data Science Fundamentals', text: 'Explore the world of data and analytics.' },
];

export default function App() {
  return (
    <Screen>
      <GlobalStyle />
      <TabStrip>
        <TabSearch>
          <svg width="14" height="10" viewBox="0 0 14 10">
            <path d="M1.500 2L7 7.500 12.500 2" fill="none" stroke="#1f1e10" strokeWidth="2.600" />
          </svg>
        </TabSearch>
        <Tab $w={354} $end={5}>
          <GptIcon />
          <TabTitle>ChatGPT</TabTitle>
          <MdClose size={20} />
        </Tab>
        <TabDivider $color="#dccd6c" />
        <Tab $w={360} $end={11}>
          <YoutubeIcon />
          <TabTitle $fade>(111) Taylor Swift - Lover (Live</TabTitle>
          <TabSound>
            <MdOutlineVolumeUp size={24} />
          </TabSound>
          <MdClose size={20} />
        </Tab>
        <Tab $w={348} $active $end={2}>
          <GlobeIcon color="#5f6368" />
          <TabTitle>E-Learning Platform</TabTitle>
          <MdClose size={20} />
        </Tab>
        <Tab $w={360} $end={5}>
          <span style={{ width: 6 }} />
          <FaGithub size={25} color="#24292f" />
          <TabTitle $gap={11}>Ananna-ahmd/laravel12</TabTitle>
          <MdClose size={20} />
        </Tab>
        <TabDivider $color="#dccd6c" />
        <NewTab>
          <MdAdd size={24} />
        </NewTab>
        <WindowButtons>
          <WindowButton>
            <svg width="16" height="16" viewBox="0 0 16 16">
              <path d="M0 7.300h15.500" stroke="#000" strokeWidth="1.800" />
            </svg>
          </WindowButton>
          <WindowButton>
            <svg width="16" height="16" viewBox="0 0 16 16" fill="none" stroke="#000" strokeWidth="1.600">
              <rect x="1" y="3.500" width="11" height="11" rx="2" />
              <path d="M4 1h7.500q3.500 0 3.500 3.500V12" />
            </svg>
          </WindowButton>
          <WindowButton>
            <svg width="16" height="16" viewBox="0 0 16 16">
              <path d="M.7.700l14.600 14.600M15.300.7L.7 15.300" stroke="#000" strokeWidth="1.700" />
            </svg>
          </WindowButton>
        </WindowButtons>
      </TabStrip>

      <ToolbarBack>
        <Toolbar>
          <ToolButton>
            <MdArrowBack size={27} />
          </ToolButton>
          <ToolButton>
            <MdArrowForward size={27} />
          </ToolButton>
          <ToolButton>
            <MdRefresh size={29} />
          </ToolButton>
          <AddressBar>
            <SiteInfo>
              <MdInfoOutline size={25} />
            </SiteInfo>
            <Url>
              <b>localhost</b>:1524/dashboard#courses
            </Url>
            <MdStarBorder size={29} color={olive} />
          </AddressBar>
          <Extensions>
            <ToolButton>
              <TranslateIcon />
            </ToolButton>
            <ToolButton>
              <CookieIcon />
            </ToolButton>
            <ToolButton>
              <GrammarlyIcon />
            </ToolButton>
            <ToolButton>
              <DropperIcon />
            </ToolButton>
            <ToolButton>
              <BlockHand />
            </ToolButton>
            <ToolButton>
              <PuzzleIcon />
            </ToolButton>
            <DividerSlot>
              <Divider $color="#f3e486" />
            </DividerSlot>
            <ToolButton>
              <MdQueueMusic size={30} />
            </ToolButton>
            <ToolButton>
              <SidePanelIcon />
            </ToolButton>
            <ToolButton>
              <Avatar />
            </ToolButton>
            <ToolButton>
              <MdMoreVert size={30} />
            </ToolButton>
          </Extensions>
        </Toolbar>
      </ToolbarBack>

      <Bookmarks>
        {bookmarks.map((b) => (
          <Bookmark key={b.label} $w={b.w} $track={b.track}>
            {b.icon}
            {b.label}
          </Bookmark>
        ))}
        <AllBookmarks>
          <Divider $color="#f3e486" />
          <MdOutlineFolder size={28} />
          All Bookmarks
        </AllBookmarks>
      </Bookmarks>

      <Page>
        <Hero>
          <HeroTitle>A3 School</HeroTitle>
          <HeroText>Learn Anytime, Anywhere</HeroText>
          <Nav>
            <span>Home</span>
            <span>Courses</span>
            <span>Contact</span>
          </Nav>
        </Hero>
        <Login>Log in</Login>
        <Panel>
          <PanelTitle>Our Courses</PanelTitle>
          <Courses>
            {courses.map((c) => (
              <Course key={c.alt}>
                <CourseImage>
                  <BrokenImage />
                  {c.alt}
                </CourseImage>
                <CourseTitle>{c.title}</CourseTitle>
                <CourseText>{c.text}</CourseText>
              </Course>
            ))}
          </Courses>
        </Panel>
        <Footer>© 2024 A3 School</Footer>
      </Page>

      <Taskbar>
        <WindowsLogo />
        <SearchBox>
          <SearchGlass />
          <SearchLabel>Search</SearchLabel>
          <Palace />
        </SearchBox>
        <TaskApp>
          <TaskView />
        </TaskApp>
        <TaskApp>
          <WeatherIcon />
          <CountBadge>1</CountBadge>
        </TaskApp>
        <TaskApp>
          <ChatIcon />
        </TaskApp>
        <TaskApp $state="open">
          <WordSheet />
          <OfficeGlyph $from="#2268c8" $to="#12449c">W</OfficeGlyph>
        </TaskApp>
        <TaskApp>
          <ExcelSheet />
          <OfficeGlyph $from="#18884f" $to="#0b6231">X</OfficeGlyph>
        </TaskApp>
        <TaskApp $state="open">
          <FolderIcon />
        </TaskApp>
        <TaskApp>
          <EdgeIcon />
        </TaskApp>
        <TaskApp>
          <FirefoxIcon />
        </TaskApp>
        <TaskApp $state="active">
          <ChromeIcon />
        </TaskApp>
        <TaskApp $state="open">
          <StormShape />
          <StormText>PS</StormText>
        </TaskApp>
        <Tray>
          <TrayIcon $gap={15}>
            <svg width="19" height="12" viewBox="0 0 19 12">
              <path d="M1 10.500l8.500-8.500 8.500 8.500" fill="none" stroke="#fff" strokeWidth="1.600" />
            </svg>
          </TrayIcon>
          <TrayIcon>
            <IconShield />
          </TrayIcon>
          <TrayIcon>
            <IconSync />
          </TrayIcon>
          <TrayIcon>
            <IconCloud />
          </TrayIcon>
          <TrayIcon>
            <TeamsIcon />
          </TrayIcon>
          <TrayIcon $gap={18}>
            <RedArrow />
          </TrayIcon>
          <TrayIcon>
            <NetIcon />
          </TrayIcon>
          <TrayIcon>
            <SoundIcon />
          </TrayIcon>
          <TrayIcon $gap={0}>
            <BatteryIcon />
          </TrayIcon>
          <Clock>
            12:32 PM
            <br />
            2/28/2024
          </Clock>
          <Notifications>4</Notifications>
        </Tray>
      </Taskbar>
    </Screen>
  );
}
